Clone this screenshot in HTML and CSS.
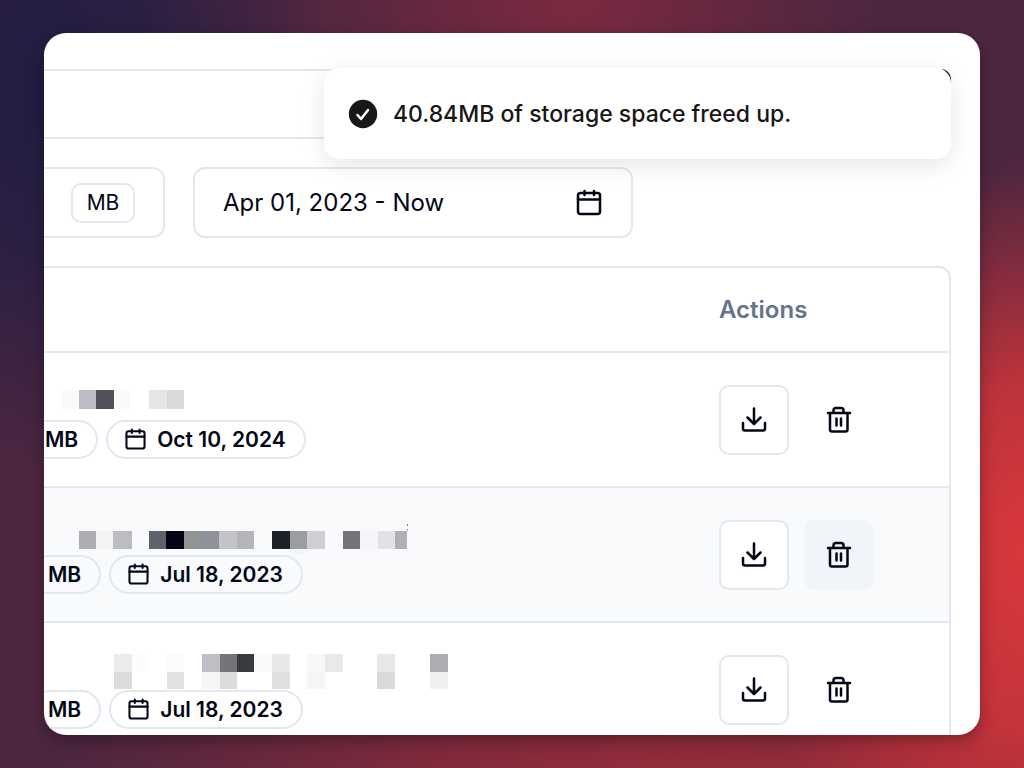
FILE: index.html
```html
<!DOCTYPE html>
<html lang="en">
<head>
    <meta charset="utf-8">
    <title>Storage</title>
    <link rel="stylesheet" href="styles.css">
</head>
<body>
    <!-- shared icons -->
    <svg class="sprite" aria-hidden="true">
        <symbol id="calendar" viewBox="0 0 28 28">
            <rect x="3" y="4" width="22" height="21" rx="2.500"/>
            <path d="M3 10.500H25M9.500 2v4M19 2v4"/>
        </symbol>
        <symbol id="download" viewBox="0 0 28 28">
            <path d="M14 2.500v15M7.500 11.500l6.500 6.500 6.500-6.500M3 17v5.500a2 2 0 0 0 2 2h18a2 2 0 0 0 2-2v-5.500"/>
        </symbol>
        <symbol id="trash" viewBox="0 0 28 28">
            <path d="M3 7h22M8.500 7V4.500a2.500 2.500 0 0 1 2.500-2.500h5a2.500 2.500 0 0 1 2.500 2.500V7M5 7V23.500a2 2 0 0 0 2 2h13.500a2 2 0 0 0 2-2V7M11.500 12.500v7M16 12.500v7"/>
        </symbol>
    </svg>

    <main class="window">
        <header class="header">
            <div class="header-action"></div>
        </header>

        <div class="filters">
            <div class="size-field">
                <button class="unit" type="button">MB</button>
            </div>
            <button class="date-field" type="button">
                Apr 01, 2023 - Now
                <svg class="icon"><use href="#calendar"/></svg>
            </button>
        </div>

        <div class="table-box">
            <table class="files">
                <thead>
                    <tr>
                        <td></td>
                        <th class="actions" scope="col">Actions</th>
                    </tr>
                </thead>
                <tbody>
                    <tr>
                        <td>
                            <svg class="redacted" viewBox="0 0 460 39" aria-hidden="true">
                                <rect x="17" y="9" width="18" height="19" fill="#fafafa"/>
                                <rect x="35" y="9" width="17" height="19" fill="#bcbdc2"/>
                                <rect x="52" y="9" width="18" height="19" fill="#515258"/>
                                <rect x="70" y="9" width="17" height="19" fill="#fafafa"/>
                                <rect x="105" y="9" width="18" height="19" fill="#e5e6e8"/>
                                <rect x="123" y="9" width="17" height="19" fill="#d9dadc"/>
                            </svg>
                            <div class="pills">
                                <span class="pill size cut">MB</span>
                                <span class="pill"><svg class="icon-small"><use href="#calendar"/></svg>Oct 10, 2024</span>
                            </div>
                        </td>
                        <td class="actions">
                            <div class="buttons">
                                <button class="btn outline" type="button" aria-label="Download"><svg class="icon"><use href="#download"/></svg></button>
                                <button class="btn" type="button" aria-label="Delete"><svg class="icon"><use href="#trash"/></svg></button>
                            </div>
                        </td>
                    </tr>
                    <tr class="hovered">
                        <td>
                            <svg class="redacted" viewBox="0 0 460 39" aria-hidden="true">
                                <rect x="35" y="15" width="17" height="18" fill="#adaeb3"/>
                                <rect x="52" y="15" width="17" height="18" fill="#f3f4f6"/>
                                <rect x="69" y="15" width="19" height="18" fill="#bcbdc2"/>
                                <rect x="105" y="15" width="17" height="18" fill="#5f616b"/>
                                <rect x="122" y="15" width="18" height="18" fill="#020617"/>
                                <rect x="140" y="15" width="18" height="18" fill="#929395"/>
                                <rect x="158" y="15" width="17" height="18" fill="#90929b"/>
                                <rect x="175" y="15" width="18" height="18" fill="#c3c4c9"/>
                                <rect x="193" y="15" width="17" height="18" fill="#b4b5ba"/>
                                <rect x="228" y="15" width="18" height="18" fill="#1d2028"/>
                                <rect x="246" y="15" width="17" height="18" fill="#9c9da1"/>
                                <rect x="263" y="15" width="18" height="18" fill="#cecfd3"/>
                                <rect x="246" y="33" width="17" height="5" fill="#f4f5f7"/>
                                <rect x="299" y="15" width="17" height="18" fill="#737477"/>
                                <rect x="316" y="15" width="18" height="18" fill="#f4f5f7"/>
                                <rect x="334" y="15" width="17" height="18" fill="#e1e2e6"/>
                                <rect x="351" y="15" width="12" height="18" fill="#afb0b6"/>
                                <rect x="363" y="8" width="1" height="2" fill="#777980"/>
                                <rect x="363" y="13" width="1" height="2" fill="#a3a5aa"/>
                            </svg>
                            <div class="pills">
                                <span class="pill size">MB</span>
                                <span class="pill"><svg class="icon-small"><use href="#calendar"/></svg>Jul 18, 2023</span>
                            </div>
                        </td>
                        <td class="actions">
                            <div class="buttons">
                                <button class="btn outline" type="button" aria-label="Download"><svg class="icon"><use href="#download"/></svg></button>
                                <button class="btn active" type="button" aria-label="Delete"><svg class="icon"><use href="#trash"/></svg></button>
                            </div>
                        </td>
                    </tr>
                    <tr>
                        <td>
                            <svg class="redacted" viewBox="0 0 460 39" aria-hidden="true">
                                <rect x="70" y="3" width="18" height="18" fill="#ebebeb"/>
                                <rect x="88" y="3" width="17" height="18" fill="#fcfcfc"/>
                                <rect x="123" y="3" width="17" height="18" fill="#fbfbfb"/>
                                <rect x="158" y="3" width="18" height="18" fill="#bebfc4"/>
                                <rect x="176" y="3" width="17" height="18" fill="#757577"/>
                                <rect x="193" y="3" width="17" height="18" fill="#373a3f"/>
                                <rect x="210" y="3" width="18" height="18" fill="#f8faf9"/>
                                <rect x="228" y="3" width="18" height="18" fill="#e8e8e8"/>
                                <rect x="263" y="3" width="18" height="18" fill="#f8f8f8"/>
                                <rect x="281" y="3" width="18" height="18" fill="#e8eae9"/>
                                <rect x="333" y="3" width="18" height="18" fill="#e8e8e8"/>
                                <rect x="386" y="3" width="18" height="18" fill="#adaeb2"/>
                                <rect x="70" y="21" width="18" height="17" fill="#dcdcdc"/>
                                <rect x="123" y="21" width="17" height="17" fill="#e2e2e2"/>
                                <rect x="158" y="21" width="18" height="17" fill="#f5f5f5"/>
                                <rect x="176" y="21" width="17" height="17" fill="#dcdcdc"/>
                                <rect x="228" y="21" width="18" height="17" fill="#e0e0e0"/>
                                <rect x="263" y="21" width="18" height="17" fill="#f5f5f5"/>
                                <rect x="333" y="21" width="18" height="17" fill="#dadada"/>
                                <rect x="386" y="21" width="18" height="17" fill="#eff1f0"/>
                            </svg>
                            <div class="pills">
                                <span class="pill size">MB</span>
                                <span class="pill"><svg class="icon-small"><use href="#calendar"/></svg>Jul 18, 2023</span>
                            </div>
                        </td>
                        <td class="actions">
                            <div class="buttons">
                                <button class="btn outline" type="button" aria-label="Download"><svg class="icon"><use href="#download"/></svg></button>
                                <button class="btn" type="button" aria-label="Delete"><svg class="icon"><use href="#trash"/></svg></button>
                            </div>
                        </td>
                    </tr>
                </tbody>
            </table>
        </div>

        <div class="toast" role="status">
            <svg class="toast-icon" viewBox="0 0 30 30" aria-hidden="true">
                <circle cx="15" cy="15" r="14.200" fill="#171717"/>
                <path d="M9.500 16l3.500 4 7-9" fill="none" stroke="#fff" stroke-width="2.500" stroke-linecap="round" stroke-linejoin="round"/>
            </svg>
            40.84MB of storage space freed up.
        </div>
    </main>
</body>
</html>
```

FILE: styles.css
```css
* {
    box-sizing: border-box;
}
body {
    margin: 0;
    height: 100vh;
    padding: 33px 44px;
    display: flex;
    font-family: Inter, "Liberation Sans", sans-serif;
    font-size: 24px;
    color: #020617;
    background:
        radial-gradient(ellipse 300px 390px at 102% 72%, #dc383a 0%, #d8363acc 45%, #d8363a00 100%),
        radial-gradient(ellipse 300px 260px at 56% 0%, #7c2940 0%, #7c294000 100%),
        radial-gradient(ellipse 280px 380px at 4% 12%, #211d42 0%, #211d42cc 40%, #211d4200 100%),
        radial-gradient(ellipse 660px 260px at 70% 104%, #9c2d3a 0%, #8c2b3acc 45%, #8c2b3a00 100%),
        #4d2640;
}
button {
    font: inherit;
    color: inherit;
    background-color: #fff;
    padding: 0;
}
.sprite {
    position: absolute;
    width: 0;
    height: 0;
}
.icon,
.icon-small {
    flex: none;
    width: 28px;
    height: 28px;
    fill: none;
    stroke: currentColor;
    stroke-width: 2.5;
    stroke-linecap: round;
    stroke-linejoin: round;
}
.icon-small {
    width: 23px;
    height: 23px;
}
.window {
    position: relative;
    flex: 1;
    min-width: 0;
    overflow: hidden;
    padding-top: 36px;
    background-color: #fff;
    border-radius: 22px;
    box-shadow: 0 6px 16px rgba(0, 0, 0, 0.3);
}

/* top bar */
.header {
    height: 70px;
    margin-right: 49px;
    display: flex;
    justify-content: flex-end;
    border-top: 2px solid #e2e8f0;
    border-bottom: 2px solid #e2e8f0;
}
.header-action {
    width: 120px;
    height: 40px;
    margin-top: -2px;
    margin-right: -20px;
    border-radius: 10px;
    background-color: #0f172a;
}

/* filters */
.filters {
    display: flex;
    gap: 28px;
    margin: 28px 0;
}
.size-field {
    width: 121px;
    height: 71px;
    padding-right: 28px;
    display: flex;
    align-items: center;
    justify-content: flex-end;
    border: 2px solid #e2e8f0;
    border-left: 0;
    border-radius: 0 12px 12px 0;
}
.unit {
    width: 64px;
    height: 40px;
    border: 2px solid #e2e8f0;
    border-radius: 10px;
    font-size: 21px;
}
.date-field {
    width: 440px;
    height: 71px;
    padding: 0 28px;
    display: flex;
    align-items: center;
    justify-content: space-between;
    border: 2px solid #e2e8f0;
    border-radius: 12px;
}

/* table */
.table-box {
    margin-right: 29px;
    border: 2px solid #e2e8f0;
    border-left: 0;
    border-radius: 0 12px 0 0;
}
.files {
    width: 100%;
    border-collapse: separate;
    border-spacing: 0;
}
.files th,
.files td {
    height: 135px;
    padding: 0;
    vertical-align: middle;
    border-bottom: 2px solid #e2e8f0;
}
.files thead th,
.files thead td {
    height: 85px;
}
.files th {
    text-align: left;
    font-weight: 600;
    color: #64748b;
}
.files .actions {
    width: 230px;
}
.hovered {
    background-color: #f8fafc;
}
.redacted {
    display: block;
    width: 460px;
    height: 39px;
    shape-rendering: crispEdges;
}
.pills {
    display: flex;
    gap: 8px;
}
.pill {
    height: 39px;
    padding: 0 18px 0 16px;
    display: flex;
    align-items: center;
    gap: 10px;
    border: 2px solid #e2e8f0;
    border-radius: 20px;
    font-size: 21px;
    font-weight: 600;
}
.size {
    margin-left: -14px;
}
/* scrolled a little further to the left */
.cut {
    margin-left: -17px;
}
.buttons {
    display: flex;
    gap: 15px;
}
.btn {
    width: 70px;
    height: 70px;
    display: flex;
    align-items: center;
    justify-content: center;
    border: 0;
    border-radius: 10px;
    background-color: transparent;
}
.outline {
    border: 2px solid #e2e8f0;
    background-color: #fff;
}
.active {
    background-color: #f1f5f9;
}

/* toast */
.toast {
    position: absolute;
    top: 35px;
    right: 29px;
    width: 67%;
    height: 91px;
    padding: 0 24px;
    display: flex;
    align-items: center;
    gap: 15px;
    border-radius: 15px;
    background-color: #fff;
    box-shadow: 0 6px 24px rgba(0, 0, 0, 0.1);
    font-size: 23px;
    font-weight: 500;
    color: #171717;
}
.toast-icon {
    width: 30px;
    height: 30px;
}
```
